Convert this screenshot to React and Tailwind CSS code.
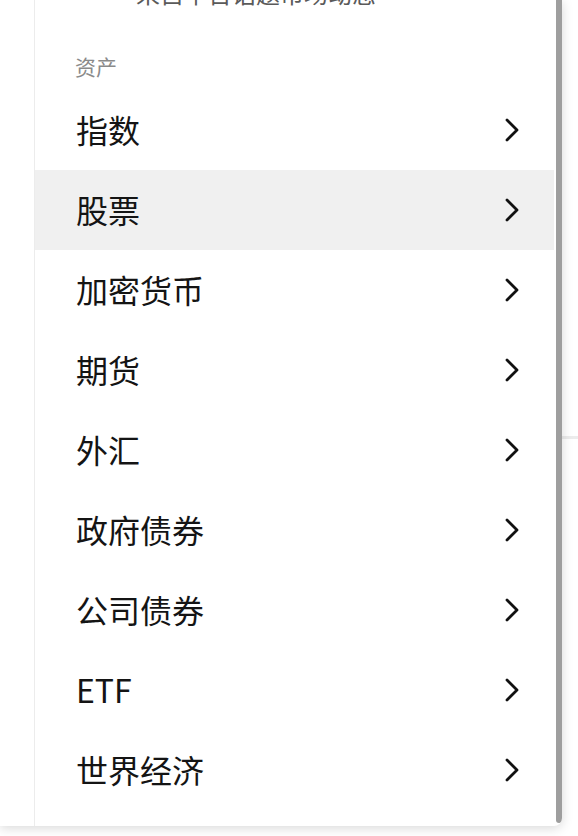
const items = ["指数", "股票", "加密货币", "期货", "外汇", "政府债券", "公司债券", "ETF", "世界经济"];

function Chevron() {
  return (
    <svg width="16" height="24" viewBox="0 0 16 24" fill="none">
      <polyline
        points="3,2 13,12 3,22"
        stroke="#111"
        strokeWidth="2.8"
        strokeLinecap="round"
        strokeLinejoin="round"
      />
    </svg>
  );
}

export default function App() {
  return (
    <div
      className="relative w-[578px] h-[836px] overflow-hidden bg-white"
      style={{ fontFamily: '"Noto Sans CJK SC", "Noto Sans", sans-serif' }}
    >
      {/* page behind the drawer */}
      <div className="absolute left-[560px] right-0 top-[436px] h-[3px] bg-[#ececec]" />

      <div className="relative flex w-[562px] h-[826px] bg-white rounded-br-lg shadow-[0_2px_12px_rgba(0,0,0,0.16)] overflow-hidden">
        <div className="w-[35px] shrink-0 border-r border-[#ececec]" />

        <div className="flex-1 flex flex-col">
          <div className="mt-[-20px] h-[26px] pl-[101px] text-[24px] leading-[26px] text-[#5a5a5a] whitespace-nowrap">
            来自平台话题市场动态
          </div>
          <div className="mt-[47px] h-[26px] pl-[40px] text-[21px] leading-[26px] text-[#8a8a8a]">
            资产
          </div>
          <div className="mt-[11px] flex flex-col mr-[2px]">
            {items.map((it, i) => (
              <div
                key={it}
                className={`flex items-center justify-between h-[80px] pl-[41px] pr-[34px] ${
                  i === 1 ? "bg-[#f0f0f0]" : ""
                }`}
              >
                <span className="text-[32px] font-normal text-[#141414] leading-none pb-[3px]">{it}</span>
                <Chevron />
              </div>
            ))}
          </div>
        </div>

        <div className="w-[6px] shrink-0 h-[823px] bg-[#9e9e9e] rounded-b-sm" />
      </div>
    </div>
  );
}
